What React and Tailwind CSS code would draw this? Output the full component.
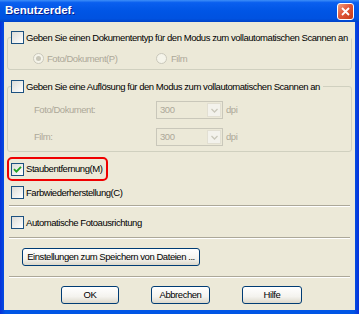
import React from "react";

function Check({ checked }) {
  return (
    <span className="w-[13px] h-[13px] border border-[#1C5180] bg-[linear-gradient(135deg,#DCDCD7,#FFFFFF)] flex items-center justify-center shrink-0">
      {checked && (
        <svg width="9" height="9" viewBox="0 0 9 9">
          <path d="M1 4.2 L3.4 6.6 L8 1.8" stroke="#21A121" strokeWidth="1.8" fill="none" />
        </svg>
      )}
    </span>
  );
}

function Radio({ on }) {
  return (
    <span className="w-[11px] h-[11px] rounded-full border border-[#CAC8BB] bg-[#F5F4EA] flex items-center justify-center shrink-0">
      {on && <span className="w-[5px] h-[5px] rounded-full bg-[#C8C6B8]" />}
    </span>
  );
}

function Combo() {
  return (
    <div className="w-[67px] h-[18px] border border-[#C9C7BA] bg-[#ECE9D8] flex items-center justify-between pl-[3px] pr-[1px]">
      <span className="text-[#ACA899]">300</span>
      <span className="w-[14px] h-[14px] border border-[#E2DFD2] bg-[#F3F2EC] flex items-center justify-center">
        <svg width="7" height="5" viewBox="0 0 7 5">
          <path d="M0.5 1 L3.5 4 L6.5 1" stroke="#C9C7BA" strokeWidth="1.3" fill="none" />
        </svg>
      </span>
    </div>
  );
}

function Btn({ children, w }) {
  return (
    <div
      className={`${w} h-[18px] border border-[#003C74] rounded-[3px] bg-[linear-gradient(180deg,#FFFFFF_0%,#F4F3EE_60%,#DCD8CB_100%)] flex items-center justify-center text-black`}
    >
      {children}
    </div>
  );
}

function Sep() {
  return (
    <div className="mx-[2px] h-[2px] border-t border-[#ACA899] border-b border-b-white" />
  );
}

export default function App() {
  return (
    <div className="w-[359px] h-[314px] flex flex-col bg-[#0055E5] font-['Liberation_Sans',Arial,sans-serif] text-[9.5px] tracking-[-0.45px] leading-none whitespace-nowrap select-none">
      <div className="h-[22px] shrink-0 flex items-center justify-between pl-[5px] pr-[5px] bg-[linear-gradient(180deg,#3D8EF8_0%,#0A5FEF_12%,#0055E5_50%,#0052E0_85%,#0043C8_100%)]">
        <span className="text-white font-bold text-[11.5px] tracking-normal [text-shadow:1px_1px_0_#0A1F8C]">Benutzerdef.</span>
        <span className="w-[17px] h-[17px] rounded-[3px] border border-white bg-[linear-gradient(135deg,#F0A080_0%,#E0573A_45%,#C43B16_100%)] flex items-center justify-center">
          <svg width="9" height="9" viewBox="0 0 9 9">
            <path d="M1 1 L8 8 M8 1 L1 8" stroke="white" strokeWidth="1.8" />
          </svg>
        </span>
      </div>
      <div className="flex-1 flex pl-[4px] pr-[5px] pb-[4px] bg-[linear-gradient(90deg,#0831D9_0%,#0055E5_1.5%,#0055E5_98.5%,#0831D9_100%)]">
        <div className="flex-1 bg-[#ECE9D8] flex flex-col px-[3px] text-black">
          <fieldset className="mt-[9px] border border-[#D0D0BF] rounded-[3px]">
            <legend className="ml-[3px] pr-[3px]">
              <span className="flex items-center gap-[2px] h-[13px]">
                <Check />
                <span>Geben Sie einen Dokumententyp für den Modus zum vollautomatischen Scannen an</span>
              </span>
            </legend>
            <div className="flex items-center h-[13px] mt-[8px] mb-[4px] ml-[25px] text-[#ACA899]">
              <div className="w-[123px] flex items-center gap-[3px]">
                <Radio on />
                <span>Foto/Dokument(P)</span>
              </div>
              <div className="flex items-center gap-[4px]">
                <Radio />
                <span>Film</span>
              </div>
            </div>
          </fieldset>

          <fieldset className="mt-[10px] border border-[#D0D0BF] rounded-[3px]">
            <legend className="ml-[3px] pr-[3px]">
              <span className="flex items-center gap-[2px] h-[13px]">
                <Check />
                <span>Geben Sie eine Auflösung für den Modus zum vollautomatischen Scannen an</span>
              </span>
            </legend>
            <div className="flex flex-col gap-[9px] mt-[8px] mb-[5px] ml-[26px] text-[#ACA899]">
              <div className="flex items-center">
                <span className="w-[122px]">Foto/Dokument:</span>
                <Combo />
                <span className="ml-[3px]">dpi</span>
              </div>
              <div className="flex items-center">
                <span className="w-[122px]">Film:</span>
                <Combo />
                <span className="ml-[3px]">dpi</span>
              </div>
            </div>
          </fieldset>

          <div className="mt-[5px] w-[101px] h-[24px] border-2 border-[#F00000] rounded-[5px] flex items-center gap-[2px] pl-[2px]">
            <Check checked />
            <span>Staubentfernung(M)</span>
          </div>

          <div className="mt-[5px] ml-[4px] flex items-center gap-[2px] h-[13px]">
            <Check />
            <span>Farbwiederherstellung(C)</span>
          </div>

          <div className="mt-[6px]">
            <Sep />
          </div>

          <div className="mt-[9px] ml-[4px] flex items-center gap-[2px] h-[13px]">
            <Check />
            <span>Automatische Fotoausrichtung</span>
          </div>

          <div className="mt-[8px]">
            <Sep />
          </div>

          <div className="mt-[9px] ml-[15px]">
            <Btn w="w-[178px]">Einstellungen zum Speichern von Dateien ...</Btn>
          </div>

          <div className="mt-[10px]">
            <Sep />
          </div>

          <div className="mt-[8px] flex items-center gap-[32px] ml-[54px]">
            <Btn w="w-[58px]">OK</Btn>
            <Btn w="w-[59px]">Abbrechen</Btn>
            <Btn w="w-[60px]">Hilfe</Btn>
          </div>
        </div>
      </div>
    </div>
  );
}
